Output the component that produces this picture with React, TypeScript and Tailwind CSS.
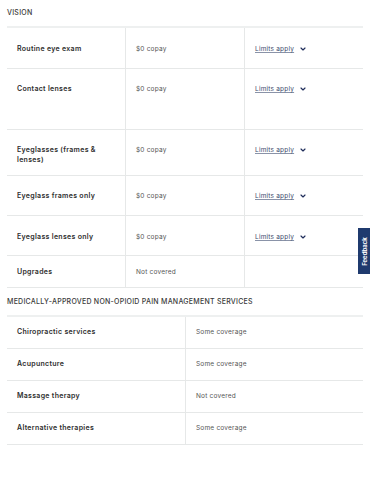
import { ChevronDown } from "lucide-react";

type Row = {
  label: string;
  value: string;
  limits?: boolean;
  h: string;
  pt: string;
};

const visionRows: Row[] = [
  { label: "Routine eye exam", value: "$0 copay", limits: true, h: "h-[41px]", pt: "pt-[16px]" },
  { label: "Contact lenses", value: "$0 copay", limits: true, h: "h-[61px]", pt: "pt-[15px]" },
  { label: "Eyeglasses (frames & lenses)", value: "$0 copay", limits: true, h: "h-[46px]", pt: "pt-[15px]" },
  { label: "Eyeglass frames only", value: "$0 copay", limits: true, h: "h-[40px]", pt: "pt-[15px]" },
  { label: "Eyeglass lenses only", value: "$0 copay", limits: true, h: "h-[40px]", pt: "pt-[16px]" },
  { label: "Upgrades", value: "Not covered", h: "h-[32px]", pt: "pt-[11px]" },
];

const painRows = [
  { label: "Chiropractic services", value: "Some coverage" },
  { label: "Acupuncture", value: "Some coverage" },
  { label: "Massage therapy", value: "Not covered" },
  { label: "Alternative therapies", value: "Some coverage" },
];

function SectionTitle({ children }: { children: string }) {
  return (
    <div className="px-[7px] text-[7px] leading-[10px] font-medium tracking-[0.25px] text-[#3a3a3a] uppercase">
      {children}
    </div>
  );
}

function LimitsLink() {
  return (
    <span className="flex items-center gap-[5px]">
      <span className="text-[6.5px] leading-[10px] tracking-[0.2px] text-[#3d4b6d] underline decoration-[#8a93a8] underline-offset-[1px]">
        Limits apply
      </span>
      <ChevronDown className="h-[8px] w-[8px] text-[#1f2d5a]" strokeWidth={3.5} />
    </span>
  );
}

export default function App() {
  return (
    <div
      className="relative h-[480px] w-[370px] overflow-hidden bg-white"
      style={{ fontFamily: "Inter, 'Noto Sans', sans-serif" }}
    >
      <div className="pt-[8px]">
        <SectionTitle>Vision</SectionTitle>
      </div>

      {/* vision table */}
      <div className="mx-[7px] mt-[8px] w-[356px] border-t-2 border-[#eef0f0]">
        {visionRows.map((r) => (
          <div key={r.label} className={`grid grid-cols-[118px_119px_119px] border-b border-[#e6e8e8] ${r.h}`}>
            <div className={`px-[10px] ${r.pt} text-[7px] leading-[10px] font-semibold tracking-[0.3px] text-[#2e2e2e]`}>
              <span className="block w-[84px]">{r.label}</span>
            </div>
            <div className={`border-l border-[#e6e8e8] px-[10px] ${r.pt} text-[6.5px] leading-[10px] tracking-[0.2px] text-[#555]`}>
              {r.value}
            </div>
            <div className={`border-l border-[#e6e8e8] px-[10px] ${r.pt}`}>
              {r.limits && <LimitsLink />}
            </div>
          </div>
        ))}
      </div>

      <div className="pt-[9px]">
        <SectionTitle>Medically-approved non-opioid pain management services</SectionTitle>
      </div>

      {/* pain management table */}
      <div className="mx-[7px] mt-[8px] w-[356px] border-t-2 border-[#eef0f0]">
        {painRows.map((r) => (
          <div key={r.label} className="grid h-[32px] grid-cols-[178px_178px] border-b border-[#e6e8e8]">
            <div className="flex items-center px-[10px] text-[7px] font-semibold tracking-[0.3px] text-[#2e2e2e]">
              {r.label}
            </div>
            <div className="flex items-center border-l border-[#e6e8e8] px-[10px] text-[6.5px] tracking-[0.2px] text-[#555]">
              {r.value}
            </div>
          </div>
        ))}
      </div>

      {/* feedback tab */}
      <div className="absolute right-0 top-[228px] flex h-[46px] w-[12px] items-center justify-center bg-[#1f3a6e]">
        <span className="-rotate-90 whitespace-nowrap text-[6px] font-bold text-white">Feedback</span>
      </div>
    </div>
  );
}
